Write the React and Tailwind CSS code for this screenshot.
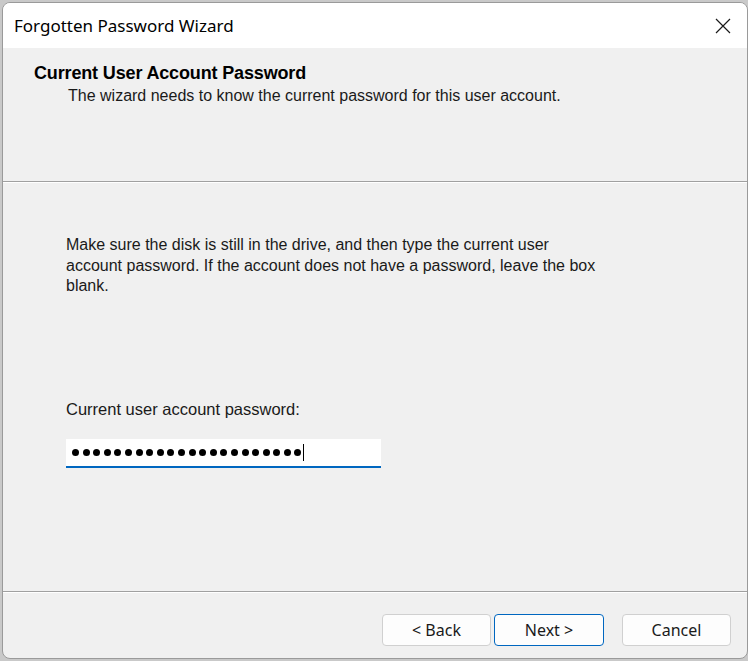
import React from "react";

const Button = ({ label, primary }) => (
  <button
    className={
      primary
        ? "h-[32px] w-[110px] rounded-[4px] border border-[#0067c0] bg-[#fdfdfd] text-[16px] text-[#1a1a1a]"
        : "h-[32px] w-[109px] rounded-[4px] border border-[#d0d0d0] bg-[#fdfdfd] text-[16px] text-[#1a1a1a]"
    }
    style={{ fontFamily: "'Noto Sans', 'Open Sans', sans-serif" }}
  >
    {label}
  </button>
);

const App = () => {
  const dots = Array.from({ length: 22 });

  return (
    <div className="h-[661px] w-[748px] overflow-hidden bg-[#c9c9c9] pl-[2px] pt-[2px]">
      <div
        className="flex h-[657px] w-[746px] flex-col overflow-hidden rounded-[8px] border border-[#9a9a9a] bg-[#f0f0f0]"
        style={{ fontFamily: "'Liberation Sans', Arial, sans-serif" }}
      >
        {/* title bar */}
        <div className="flex h-[45px] shrink-0 items-center justify-between bg-white pl-[11px] pr-[16px]">
          <span
            className="text-[17px] text-black"
            style={{ fontFamily: "'Noto Sans', 'Open Sans', sans-serif" }}
          >
            Forgotten Password Wizard
          </span>
          <svg width="16" height="16" viewBox="0 0 16 16">
            <path d="M1 1L15 15M15 1L1 15" stroke="#1a1a1a" strokeWidth="1.2" fill="none" />
          </svg>
        </div>

        {/* header */}
        <div className="h-[133px] shrink-0 pl-[31px] pt-[15px]">
          <h1 className="text-[18px] font-bold leading-[20px] tracking-[-0.15px] text-black">
            Current User Account Password
          </h1>
          <p className="mt-[3px] pl-[34px] text-[16px] leading-[20px] text-[#1a1a1a]">
            The wizard needs to know the current password for this user account.
          </p>
        </div>
        <div className="h-px shrink-0 bg-[#a0a0a0]" />
        <div className="h-px shrink-0 bg-white" />

        {/* body */}
        <div className="flex flex-1 flex-col pl-[63px] pt-[52px]">
          <p className="text-[16px] leading-[20.5px] text-[#1a1a1a]">
            Make sure the disk is still in the drive, and then type the current user
            <br />
            account password. If the account does not have a password, leave the box
            <br />
            blank.
          </p>
          <label className="mt-[102px] text-[16.5px] leading-[20px] text-[#1a1a1a]">
            Current user account password:
          </label>
          <div className="mt-[20px] flex h-[29px] w-[315px] items-center border-b-2 border-[#0067c0] bg-white pl-[6px]">
            <div className="flex items-center gap-[3.6px]">
              {dots.map((_, i) => (
                <span key={i} className="block h-[7px] w-[7px] rounded-full bg-black" />
              ))}
            </div>
            <span className="ml-[2px] block h-[17px] w-px bg-black" />
          </div>
        </div>

        {/* footer */}
        <div className="h-px shrink-0 bg-[#a0a0a0]" />
        <div className="h-px shrink-0 bg-white" />
        <div className="flex h-[65px] shrink-0 items-start justify-end pr-[16px] pt-[21px]">
          <div className="flex gap-[3px]">
            <Button label="< Back" />
            <Button label="Next >" primary />
          </div>
          <div className="ml-[18px]">
            <Button label="Cancel" />
          </div>
        </div>
      </div>
    </div>
  );
};

export default App;
